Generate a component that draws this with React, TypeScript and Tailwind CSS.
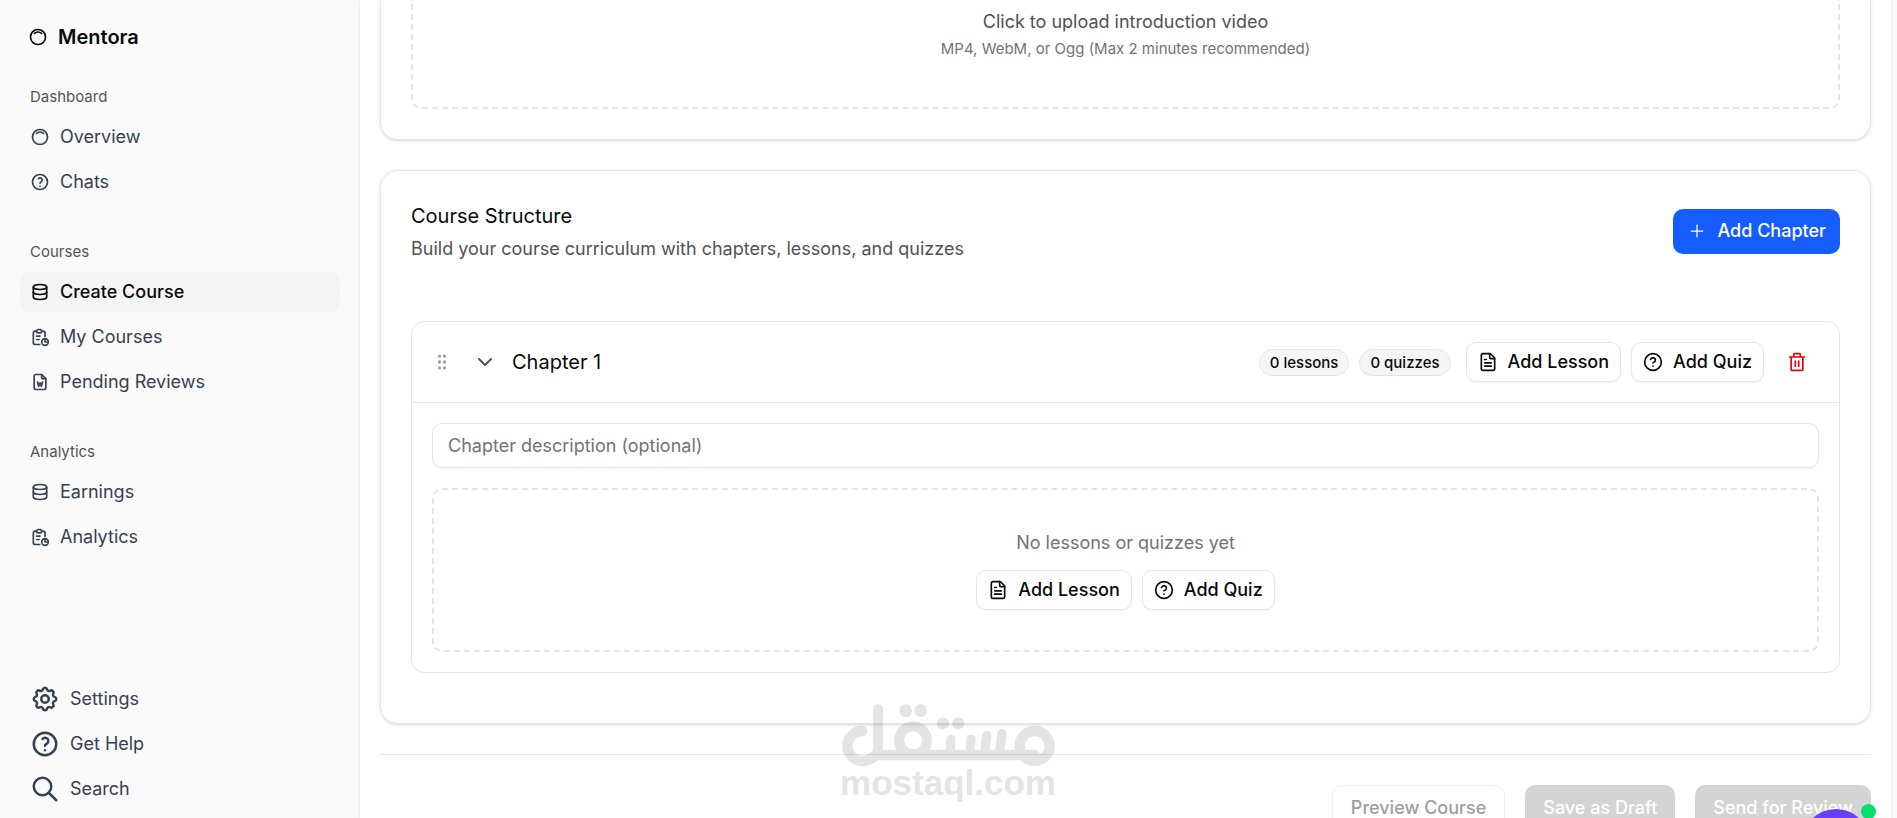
import React from "react";
import { ChevronDown, CircleHelp, FileText, GripVertical, Plus } from "lucide-react";
import { TbDatabase, TbFileWord, TbHelp, TbInnerShadowTop, TbReport, TbSearch, TbSettings } from "react-icons/tb";
import type { IconType } from "react-icons";

type NavItem = { label: string; icon: IconType; active?: boolean };

const groups: { title: string; items: NavItem[] }[] = [
  {
    title: "Dashboard",
    items: [
      { label: "Overview", icon: TbInnerShadowTop },
      { label: "Chats", icon: TbHelp },
    ],
  },
  {
    title: "Courses",
    items: [
      { label: "Create Course", icon: TbDatabase, active: true },
      { label: "My Courses", icon: TbReport },
      { label: "Pending Reviews", icon: TbFileWord },
    ],
  },
  {
    title: "Analytics",
    items: [
      { label: "Earnings", icon: TbDatabase },
      { label: "Analytics", icon: TbReport },
    ],
  },
];

const footerItems: NavItem[] = [
  { label: "Settings", icon: TbSettings },
  { label: "Get Help", icon: TbHelp },
  { label: "Search", icon: TbSearch },
];

function Sidebar() {
  return (
    <aside className="flex w-[360px] shrink-0 flex-col justify-between px-5 pb-[9px] pt-[17px]">
      <div>
        <a href="#" className="flex h-10 items-center gap-[10px] px-2 text-[20px] font-semibold text-neutral-950">
          <TbInnerShadowTop className="size-5" />
          Mentora
        </a>
        <nav className="mt-5 flex flex-col gap-[30px]">
          {groups.map((group) => (
            <section key={group.title}>
              <h2 className="flex h-10 items-center px-[10px] text-[15px] text-[#555555]">{group.title}</h2>
              <ul className="flex flex-col gap-[5px]">
                {group.items.map(({ label, icon: Icon, active }) => (
                  <li key={label}>
                    <a
                      href="#"
                      className={
                        active
                          ? "flex h-10 items-center gap-[10px] rounded-[10px] bg-[#f4f4f4] px-[10px] text-lg font-medium text-neutral-950"
                          : "flex h-10 items-center gap-[10px] rounded-[10px] px-[10px] text-lg text-[#364153]"
                      }
                    >
                      <Icon className="size-5" />
                      {label}
                    </a>
                  </li>
                ))}
              </ul>
            </section>
          ))}
        </nav>
      </div>
      <ul className="flex flex-col gap-[5px]">
        {footerItems.map(({ label, icon: Icon }) => (
          <li key={label}>
            <a href="#" className="flex h-10 items-center gap-[10px] px-[10px] text-lg text-[#364153]">
              <Icon className="size-[30px]" />
              {label}
            </a>
          </li>
        ))}
      </ul>
    </aside>
  );
}

function AddButtons() {
  const style =
    "flex h-10 items-center gap-[10px] rounded-[10px] border border-neutral-200 bg-white px-[11px] text-lg font-medium text-neutral-950 shadow-xs";
  return (
    <div className="flex gap-[10px]">
      <button type="button" className={style}>
        <FileText className="size-5" />
        Add Lesson
      </button>
      <button type="button" className={style}>
        <CircleHelp className="size-5" />
        Add Quiz
      </button>
    </div>
  );
}

function TrashIcon() {
  return (
    <svg viewBox="0 0 24 24" className="size-5" fill="none" stroke="currentColor" strokeWidth="2" strokeLinecap="round" strokeLinejoin="round" aria-hidden="true">
      <path d="M3 6h18M19 6v15a1 1 0 0 1-1 1H6a1 1 0 0 1-1-1V6M8 6V3a1 1 0 0 1 1-1h6a1 1 0 0 1 1 1v3M10 11v6M14 11v6" />
    </svg>
  );
}

function Chapter() {
  const badge = "rounded-full border border-neutral-200 bg-neutral-100 px-[10px] text-[15px] leading-[25px] font-medium text-neutral-950";
  return (
    <article className="rounded-[13px] border border-neutral-200 bg-white">
      <header className="flex h-[81px] items-center border-b border-neutral-200 px-5">
        <GripVertical className="size-5 text-neutral-400" />
        <button type="button" aria-label="Collapse chapter" className="ml-[15px] flex h-10 w-[35px] items-center justify-center text-neutral-600">
          <ChevronDown className="size-6" />
        </button>
        <h3 className="ml-[10px] flex-1 text-[20px] text-neutral-950">Chapter 1</h3>
        <div className="flex items-center gap-[10px]">
          <span className={badge}>0 lessons</span>
          <span className={badge}>0 quizzes</span>
        </div>
        <div className="ml-[15px]">
          <AddButtons />
        </div>
        <button type="button" aria-label="Delete chapter" className="ml-[10px] flex h-10 w-[45px] items-center justify-center text-red-600">
          <TrashIcon />
        </button>
      </header>
      <div className="flex flex-col gap-5 p-5">
        <input
          type="text"
          aria-label="Chapter description"
          placeholder="Chapter description (optional)"
          className="h-[45px] w-full rounded-[10px] border border-neutral-200 px-[15px] text-lg shadow-xs placeholder:text-neutral-500"
        />
        <div className="flex flex-col items-center gap-[15px] rounded-[10px] border-2 border-dashed border-neutral-200 py-10">
          <p className="text-lg leading-[25px] text-neutral-500">No lessons or quizzes yet</p>
          <AddButtons />
        </div>
      </div>
    </article>
  );
}

function Watermark() {
  return (
    <div className="pointer-events-none absolute left-[840px] top-[702px] w-[216px] text-black opacity-10">
      <svg viewBox="120 66 648 198" className="h-[66px] w-full" fill="none" stroke="currentColor" strokeLinecap="round" aria-hidden="true">
        <path strokeWidth="31" d="M187 153a45 45 0 1 0 0 90q22 0 40-18H704" />
        <path strokeWidth="29" d="M234 87V222" />
        <circle cx="339" cy="181" r="42" strokeWidth="30" />
        <circle cx="704" cy="198" r="45" strokeWidth="31" />
        <path strokeWidth="28" d="M453 178l-3 46M513 178l-4 46M560 167l-7 57M606 160l-8 64" />
        <g fill="currentColor" stroke="none">
          <circle cx="317" cy="92" r="19" />
          <circle cx="362" cy="92" r="19" />
          <circle cx="429" cy="130" r="18" />
          <circle cx="475" cy="130" r="18" />
        </g>
      </svg>
      <p className="text-center font-['Liberation_Sans',Arial,sans-serif] text-[35px] font-bold leading-[30px]">mostaql.com</p>
    </div>
  );
}

export default function App() {
  const cardShadow = "shadow-[0_1px_4px_rgba(0,0,0,0.1),0_1px_2px_-1px_rgba(0,0,0,0.2)]";
  return (
    <div className="relative flex h-screen overflow-hidden bg-[#fafafa] font-[Inter,sans-serif]">
      <Sidebar />
      <main className="mr-[6px] min-w-0 flex-1 bg-white px-5 shadow-sm">
        <section className={`rounded-b-[18px] border border-t-0 border-neutral-200 px-[30px] pb-[30px] ${cardShadow}`}>
          <div className="flex flex-col items-center gap-[5px] rounded-b-[10px] border-2 border-t-0 border-dashed border-neutral-200 pb-12 pt-[9px]">
            <p className="text-lg leading-[25px] text-neutral-600">Click to upload introduction video</p>
            <p className="text-[15px] leading-5 text-neutral-500">MP4, WebM, or Ogg (Max 2 minutes recommended)</p>
          </div>
        </section>

        <section className={`mt-[30px] rounded-[18px] border border-neutral-200 px-[30px] pb-[50px] pt-[30px] ${cardShadow}`}>
          <div className="flex items-center justify-between">
            <div className="flex flex-col gap-[5px]">
              <h2 className="text-[20px] leading-[30px] text-neutral-950">Course Structure</h2>
              <p className="text-lg leading-[25px] text-neutral-600">
                Build your course curriculum with chapters, lessons, and quizzes
              </p>
            </div>
            <button type="button" className="flex h-[45px] items-center gap-[10px] rounded-[10px] bg-[#155dfc] px-[14px] text-lg font-medium text-white">
              <Plus className="size-5" strokeWidth={1.5} />
              Add Chapter
            </button>
          </div>
          <div className="mt-[60px]">
            <Chapter />
          </div>
        </section>

        <footer className="mt-[30px] flex justify-end gap-5 border-t border-neutral-200 pt-[30px] text-lg font-medium">
          <button type="button" disabled className="h-[45px] rounded-[10px] border border-neutral-200 bg-white px-[18px] text-neutral-700 opacity-50">
            Preview Course
          </button>
          <button type="button" disabled className="h-[45px] rounded-[10px] bg-[#d4d4d4] px-[18px] text-white">
            Save as Draft
          </button>
          <button type="button" disabled className="h-[45px] rounded-[10px] bg-[#d4d4d4] px-[18px] text-white">
            Send for Review
          </button>
        </footer>
      </main>

      <Watermark />
      <button type="button" aria-label="Open chat" className="absolute right-[27px] top-[809px] size-[68px] rounded-full bg-[#6a3df9]" />
      <span className="absolute right-[21px] top-[804px] size-[15px] rounded-full bg-[#05df72]" />
    </div>
  );
}
